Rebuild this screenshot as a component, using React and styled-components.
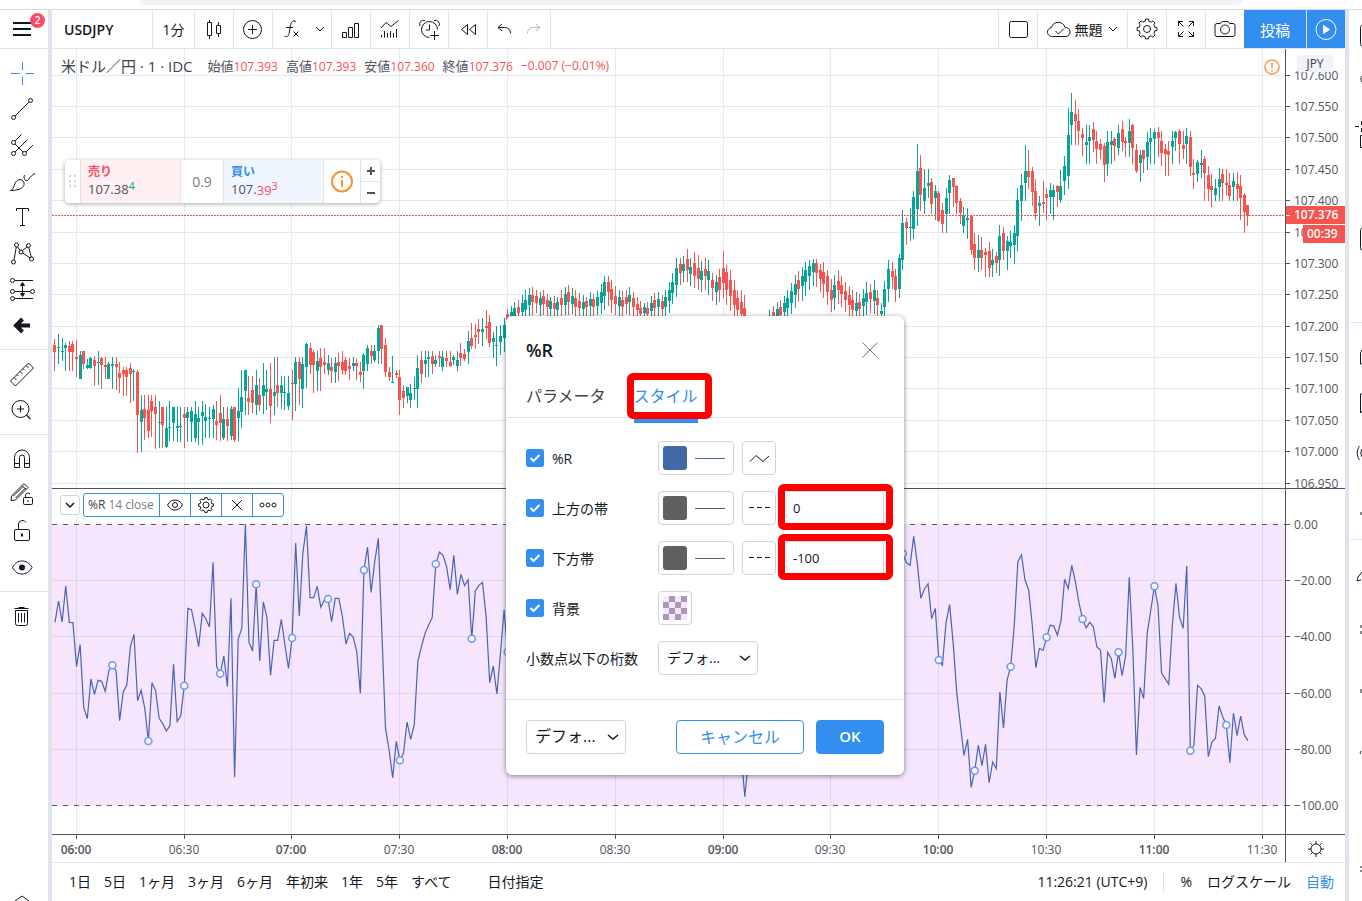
import React, { useState } from 'react';
import styled, { createGlobalStyle } from 'styled-components';

const GlobalStyle = createGlobalStyle`
  * {
    box-sizing: border-box;
  }
  body {
    margin: 0;
    background: #fff;
    color: #131722;
    font-family: 'Open Sans', 'Noto Sans CJK JP', sans-serif;
    font-size: 14px;
  }
  button, input, select {
    font-family: inherit;
    color: inherit;
  }
`;

const BLUE = '#328eef';
const GREEN = '#05a699';
const RED = '#f7534f';
const LINE = '#e0e3eb';
const AXIS = '#50535e';

const Page = styled.div`
  display: flex;
  flex-direction: column;
  height: 100vh;
  overflow: hidden;
`;

const BrowserStrip = styled.div`
  height: 10px;
  flex: none;
  padding: 0 120px 0 140px;
  border-bottom: 1px solid #dadce0;
`;

const AddressBar = styled.div`
  height: 5px;
  background: #f1f3f4;
  border-radius: 0 0 8px 8px;
`;

const Shell = styled.div`
  display: flex;
  flex: 1;
  min-height: 0;
`;

const SideBar = styled.nav`
  display: flex;
  flex-direction: column;
  width: 48px;
  flex: none;
`;

const Gutter = styled.div`
  width: 4px;
  flex: none;
  background: ${LINE};
`;

const Center = styled.main`
  display: flex;
  flex-direction: column;
  flex: 1;
  min-width: 0;
`;

const RightBar = styled.aside`
  width: 13px;
  flex: none;
  overflow: hidden;
`;

const IconButton = styled.button`
  display: flex;
  align-items: center;
  justify-content: center;
  border: 0;
  padding: 0;
  background: none;
  cursor: pointer;
`;

const MenuButton = styled(IconButton)`
  position: relative;
  height: 39px;
  padding-right: 4px;
  border-bottom: 1px solid ${LINE};
`;

const Badge = styled.span`
  position: absolute;
  top: 3px;
  left: 30px;
  width: 15px;
  height: 15px;
  border-radius: 8px;
  background: #ff4a68;
  color: #fff;
  font-size: 10px;
  font-weight: 600;
  line-height: 15px;
  text-align: center;
`;

const ToolGroup = styled.div`
  display: flex;
  flex-direction: column;
  padding: 6px 0;
  border-bottom: ${props => (props.$last ? '0' : `1px solid ${LINE}`)};
`;

const ToolButton = styled(IconButton)`
  width: 44px;
  height: 36px;
  color: ${props => (props.$active ? BLUE : '#131722')};
`;

const SideFoot = styled(IconButton)`
  width: 44px;
  height: 8px;
  margin-top: auto;
`;

const TopBar = styled.header`
  display: flex;
  height: 39px;
  flex: none;
  border-bottom: 1px solid ${LINE};
`;

const TopButton = styled(IconButton)`
  width: ${props => props.$w || 39}px;
  gap: ${props => props.$gap || 0}px;
  border-right: ${props => (props.$plain ? '0' : `1px solid ${LINE}`)};
  font-size: 14px;
`;

const SymbolButton = styled(TopButton)`
  justify-content: flex-start;
  padding-left: 12px;
  font-weight: 600;
`;

const Spacer = styled.div`
  flex: 1;
`;

const RightTools = styled.div`
  display: flex;
  border-left: 1px solid ${LINE};
`;

const PublishButton = styled(IconButton)`
  width: ${props => props.$w}px;
  background: ${BLUE};
  color: #fff;
  font-size: 15px;
  border-right: ${props => (props.$split ? `1px solid ${LINE}` : '0')};
`;

const Pane = styled.section`
  position: relative;
  display: flex;
  flex: ${props => props.$size} 1 0;
  min-height: 0;
  border-bottom: 1px solid ${AXIS};
`;

const Plot = styled.svg`
  display: block;
  flex: 1;
  min-width: 0;
  height: 100%;
`;

const Axis = styled.svg`
  display: block;
  flex: none;
  width: 60px;
  height: 100%;
  border-left: 1px solid ${AXIS};
  font-size: 12px;
`;

const TimeRow = styled.div`
  display: flex;
  flex: none;
  height: 27px;
  font-size: 12px;
`;

const TimeGear = styled(IconButton)`
  width: 60px;
  border-left: 1px solid ${AXIS};
`;

const SymbolLegend = styled.div`
  position: absolute;
  top: 5px;
  left: 9px;
  display: flex;
  align-items: center;
  gap: 8px;
  height: 22px;
  white-space: nowrap;
  font-size: 12px;
  color: ${RED};
`;

const SymbolName = styled.span`
  margin-right: 7px;
  font-size: 15px;
  color: #3c404b;
`;

const OhlcLabel = styled.span`
  font-size: 13px;
  color: #50535e;
`;

const TradeBox = styled.div`
  position: absolute;
  top: 111px;
  left: 13px;
  display: flex;
  height: 43px;
  border-radius: 4px;
  background: #fff;
  box-shadow: 0 1px 4px rgba(60, 64, 80, 0.45);
  overflow: hidden;
`;

const Handle = styled.div`
  display: flex;
  align-items: center;
  justify-content: center;
  width: 15px;
`;

const Quote = styled.button`
  display: flex;
  flex-direction: column;
  justify-content: center;
  width: 101px;
  padding: 0 7px;
  border: 1px solid ${LINE};
  border-width: 0 1px;
  background: ${props => (props.$buy ? '#f0f6fe' : '#fff0f2')};
  text-align: left;
  font-size: 13px;
  line-height: 18px;
  color: #50535e;
`;

const QuoteSide = styled.span`
  font-size: 12px;
  font-weight: 700;
  line-height: 16px;
  color: ${props => (props.$buy ? BLUE : '#ff4a68')};
`;

const Pips = styled.span`
  color: ${props => props.$color};
  sup {
    font-size: 11px;
    line-height: 10px;
  }
`;

const Spread = styled.div`
  width: 42px;
  line-height: 43px;
  text-align: center;
  color: #787b86;
`;

const TradeInfo = styled(IconButton)`
  width: 36px;
`;

const Stepper = styled.div`
  display: flex;
  flex-direction: column;
  width: 20px;
  border-left: 1px solid ${LINE};
`;

const StepButton = styled(IconButton)`
  flex: 1;
  & + & {
    border-top: 1px solid ${LINE};
  }
`;

const StudyLegend = styled.div`
  position: absolute;
  top: 4px;
  left: 8px;
  display: flex;
  align-items: center;
  gap: 3px;
`;

const Collapse = styled(IconButton)`
  width: 20px;
  height: 20px;
  border: 1px solid #d1d4dc;
  border-radius: 3px;
  background: #fff;
`;

const StudyBox = styled.div`
  display: flex;
  height: 24px;
  border: 1px solid ${BLUE};
  border-radius: 3px;
  background: #fff;
`;

const StudyName = styled.span`
  width: 75px;
  padding-left: 4px;
  font-size: 12px;
  line-height: 22px;
  white-space: nowrap;
  color: #787b86;
  b {
    font-weight: 400;
    color: #3c404b;
  }
`;

const StudyButton = styled(IconButton)`
  width: 31px;
  border-left: 1px solid ${BLUE};
`;

const BottomBar = styled.footer`
  display: flex;
  align-items: center;
  flex: none;
  height: 39px;
  padding: 0 11px 0 17px;
  border-top: 1px solid ${LINE};
  white-space: nowrap;
`;

const Ranges = styled.div`
  display: flex;
  gap: 13px;
`;

const TextButton = styled.button`
  border: 0;
  padding: 0;
  background: none;
  font-size: 14px;
  line-height: 20px;
  color: ${props => (props.$on ? BLUE : '#131722')};
`;

const GotoDate = styled(TextButton)`
  margin-left: 36px;
`;

const ScaleTools = styled.div`
  display: flex;
  gap: 15px;
  margin-left: 16px;
  padding-left: 16px;
  border-left: 1px solid ${LINE};
`;

const Dialog = styled.section`
  position: absolute;
  top: 316px;
  left: calc(50% - 175px);
  width: 398px;
  border-radius: 6px;
  background: #fff;
  box-shadow: 0 1px 5px rgba(40, 44, 60, 0.6);
`;

const DialogHead = styled.div`
  display: flex;
  align-items: center;
  justify-content: space-between;
  height: 58px;
  padding: 10px 24px 0 20px;
`;

const DialogTitle = styled.h2`
  margin: 0;
  font-size: 18px;
  font-weight: 600;
`;

const Tabs = styled.div`
  display: flex;
  gap: 28px;
  height: 44px;
  padding: 0 20px;
  border-bottom: 1px solid ${LINE};
`;

const Tab = styled.button`
  position: relative;
  height: 49px;
  padding: 0 0 2px;
  border: 0;
  border-bottom: 5px solid ${props => (props.$active ? BLUE : 'transparent')};
  background: none;
  font-size: 16px;
  color: ${props => (props.$active ? BLUE : '#3c404b')};
`;

const Marker = styled.span`
  position: absolute;
  inset: ${props => props.$inset};
  border: 7px solid #fe0000;
  border-radius: 6px;
  pointer-events: none;
`;

const DialogBody = styled.div`
  display: flex;
  flex-direction: column;
  gap: 16px;
  padding: 23px 20px 24px;
`;

const Row = styled.div`
  display: grid;
  grid-template-columns: 132px 1fr;
  align-items: center;
  height: 34px;
`;

const CheckLabel = styled.label`
  display: flex;
  align-items: center;
  gap: 8px;
  color: #131722;
`;

const CheckInput = styled.input`
  appearance: none;
  width: 18px;
  height: 18px;
  margin: 0;
  border-radius: 3px;
  border: 1px solid ${BLUE};
`;

const CheckWrap = styled.span`
  position: relative;
  display: flex;
  svg {
    position: absolute;
    top: 0;
    left: 0;
    pointer-events: none;
  }
`;

const Controls = styled.div`
  display: flex;
  gap: 8px;
`;

const BoxButton = styled(IconButton)`
  justify-content: flex-start;
  gap: 8px;
  width: ${props => props.$w || 34}px;
  height: 34px;
  padding: 0 4px;
  border: 1px solid #d1d4dc;
  border-radius: 4px;
  background: #fff;
`;

const Swatch = styled.span`
  width: 24px;
  height: 24px;
  border-radius: 3px;
  background: ${props => props.$color};
`;

const Stroke = styled.span`
  width: 30px;
  height: 1px;
  background: ${props => props.$color};
`;

const ValueBox = styled.span`
  position: relative;
`;

const ValueInput = styled.input`
  display: block;
  width: 100px;
  height: 34px;
  padding: 0 8px;
  border: 1px solid #d1d4dc;
  border-radius: 4px;
  font-size: 13px;
`;

const SelectWrap = styled.span`
  position: relative;
  display: block;
  width: 100px;
  svg {
    position: absolute;
    top: 11px;
    right: 7px;
    pointer-events: none;
  }
`;

const Select = styled.select`
  appearance: none;
  display: block;
  width: 100px;
  height: 34px;
  padding: 0 8px 2px;
  border: 1px solid #d1d4dc;
  border-radius: 4px;
  background: #fff;
  font-size: ${props => props.$size}px;
`;

const DialogFoot = styled.div`
  display: flex;
  align-items: center;
  gap: 12px;
  padding: 20px 20px 21px;
  border-top: 1px solid ${LINE};
`;

const ActionButton = styled.button`
  width: ${props => props.$w}px;
  height: 34px;
  padding: 0 0 2px;
  border: 1px solid ${BLUE};
  border-radius: 4px;
  background: ${props => (props.$primary ? BLUE : '#fff')};
  color: ${props => (props.$primary ? '#fff' : BLUE)};
  font-size: ${props => (props.$primary ? 15 : 16)}px;
  font-weight: ${props => (props.$primary ? 600 : 400)};
`;

// Line icon on a square grid, one unit per pixel
const Icon = ({ size = 28, w = 1, children, color = 'currentColor' }) => (
  <svg width={size} height={size} viewBox={`0 0 ${size} ${size}`} fill="none" stroke={color} strokeWidth={w} aria-hidden="true">
    {children}
  </svg>
);

const gearPath = (cx, cy, outer, inner, teeth) => {
  const points = [];
  const step = (Math.PI * 2) / teeth;
  for (let k = 0; k < teeth; k++) {
    const a = k * step - Math.PI / 2;
    [[-0.3, inner], [-0.2, outer], [0.2, outer], [0.3, inner]].forEach(([f, r]) => {
      points.push(`${(cx + r * Math.cos(a + f * step)).toFixed(2)} ${(cy + r * Math.sin(a + f * step)).toFixed(2)}`);
    });
  }
  return `M${points.join('L')}Z`;
};

const Chevron = ({ w = 1 }) => (
  <Icon size={12} w={w}><path d="M2 4l4 4 4-4" /></Icon>
);

const TOOLS = [
  [
    ['クロス', <path d="M14.500 3v8M14.500 18v8M3 14.500h8.500M17.500 14.500H26" />],
    ['トレンドライン', <><circle cx="5.500" cy="22.500" r="2" /><circle cx="22.500" cy="5.500" r="2" /><path d="M7 21L21 7" /></>],
    ['ピッチフォーク', <><circle cx="5.500" cy="11.500" r="2" /><circle cx="5.500" cy="22.500" r="2" /><circle cx="16.500" cy="22.500" r="2" /><path d="M7 10l6.500-6.500M7 21L19.500 8.500M18 21l7-7M7 13l8 8" /></>],
    ['ブラシ', <path d="M2.500 23.500c3-1 3-4 4.500-7 1.500-4 6-5 8-2.500 2.500 3 .5 6.500-3 8-2.500 1-6 1.500-9.500 1.500zM16.500 8c-1 2-.5 4.500 1.500 5.500 1 .5 2 0 3-1.500 1.500-2.500 3-4 6-5.500" />],
    ['テキスト', <path d="M8.500 8V5.500h12V8M14.500 5.500v17M12 22.500h5" />],
    ['パターン', <><circle cx="5.500" cy="23" r="2" /><circle cx="8.500" cy="6" r="2" /><circle cx="13" cy="13" r="2" /><circle cx="20.500" cy="6.500" r="2" /><circle cx="23.500" cy="20" r="2" /><path d="M6 21L8.300 8M9.500 7.800l2.500 3.500M14.300 11.500l5-3.500M20.800 8.500l2.400 9.500M14.800 14l7.200 5" /></>],
    ['予測', <><circle cx="4.500" cy="5.500" r="2" /><circle cx="4.500" cy="16.500" r="2" /><circle cx="24.500" cy="16.500" r="2" /><circle cx="4.500" cy="23.500" r="2" /><path d="M7 5.500h18M7 16.500h15M7 23.500h18M14.500 8v13" /><path d="M12.500 10.500l2-3 2 3zM12.500 18.500l2 3 2-3z" fill="currentColor" /></>],
    ['矢印', <path d="M14.500 8L8 14.500l6.500 6.500M8.500 14.500H22" strokeWidth="4" />],
  ],
  [
    ['計測', <path d="M2.500 21L20.500 3l5 5L7.500 26zM6 17.500l2.500 2.500M9 14.500l1.500 1.500M12 11.500l2.500 2.500M15 8.500l1.500 1.500M18 5.500l2.500 2.500" />],
    ['ズーム', <><circle cx="12.500" cy="13" r="8.500" /><path d="M12.500 9.500v7M9 13h7M18.500 19l4 4" strokeWidth="1.200" /></>],
  ],
  [
    ['マグネット', <path d="M6.500 22.500v-10a7.500 7.500 0 0 1 15 0v10h-5v-10a2.500 2.500 0 0 0-5 0v10zM6.500 18.500h5M16.500 18.500h5" />],
    ['描画モード', <><path d="M3.500 15L16 2.500l4 4L7.500 19l-4.500.5zM5.500 15L15 5.500M7.500 17L17.500 7M14 4.500l4 4" /><rect x="15.500" y="16.500" width="9" height="7" rx="1" /><path d="M17.500 16v-2a2.500 2.500 0 0 1 4.500-1M20 19v2" /></>],
    ['ロック', <><rect x="6.500" y="12.500" width="15" height="11" rx="1.500" /><path d="M10.500 12v-5a4 4 0 0 1 7.500-1.500" /><path d="M14 16.500v3" strokeWidth="2" /></>],
    ['表示', <><path d="M4.500 14.500C7 10 10 8 14 8s7.500 2 10 6.500C21.500 19 18 21 14 21s-7-2-9.500-6.500z" /><circle cx="14" cy="14.500" r="3" fill="currentColor" stroke="none" /></>],
  ],
  [
    ['削除', <path d="M7.500 8.500h12v13a2 2 0 0 1-2 2h-8a2 2 0 0 1-2-2zM6.500 6.500h14M10.500 5.500h6M10.500 11v9.500M13.500 11v9.500M16.500 11v9.500" />],
  ],
];

const LeftTools = () => (
  <SideBar>
    <MenuButton aria-label="メニュー">
      <Icon w={2}><path d="M5 8h18M5 14h18M5 20h18" /></Icon>
      <Badge>2</Badge>
    </MenuButton>
    {TOOLS.map((group, g) => (
      <ToolGroup key={g} $last={g === TOOLS.length - 1}>
        {group.map(([name, shape], k) => (
          <ToolButton key={name} aria-label={name} $active={g === 0 && k === 0}>
            <Icon>{shape}</Icon>
          </ToolButton>
        ))}
      </ToolGroup>
    ))}
    <SideFoot aria-label="開く">
      <svg width="20" height="8" fill="none" stroke="#131722" aria-hidden="true"><path d="M3 8l7-5 7 5" /></svg>
    </SideFoot>
  </SideBar>
);

const TopTools = () => (
  <TopBar>
    <SymbolButton $w={101}>USDJPY</SymbolButton>
    <TopButton $w={42}>1分</TopButton>
    <TopButton aria-label="ローソク足">
      <Icon><path d="M7.500 7.500h4v13h-4zM9.500 5v2.500M9.500 20.500V24M16.500 10.500h4v8h-4zM18.500 7v3.500M18.500 18.500V22" /></Icon>
    </TopButton>
    <TopButton aria-label="比較">
      <Icon><circle cx="13.500" cy="14.500" r="9" /><path d="M13.500 10v9M9 14.500h9" /></Icon>
    </TopButton>
    <TopButton $w={59} $gap={8} aria-label="インジケーター">
      <Icon><path d="M18 6.500c-3-1.500-5 .5-5.500 4l-1.500 8c-.5 3-2.500 4-4.500 2.500M8 12.500h7M15.500 16.500l5 5M20.500 16.500l-5 5" /></Icon>
      <Chevron />
    </TopButton>
    <TopButton aria-label="財務">
      <Icon><path d="M5.500 17.500h4v5h-4zM11.500 12.500h4v10h-4zM17.500 8.500h4v14h-4z" /></Icon>
    </TopButton>
    <TopButton aria-label="テンプレート">
      <Icon><path d="M5 13l5-5.500 5 4 7.500-6M5.500 20v2.500M8.500 16v6.500M11.500 18v4.500M14.500 16v6.500M17.500 18v4.500M20.500 14v8.500" /></Icon>
    </TopButton>
    <TopButton aria-label="アラート">
      <Icon><path d="M14.500 22.500a8 8 0 1 1 8-8M14.500 9.500v5.500H11M5 11a4 4 0 0 1 5-5.500M24 11a4 4 0 0 0-5-5.500M15 20.500h9M19.500 16v9" /></Icon>
    </TopButton>
    <TopButton aria-label="リプレイ">
      <Icon><path d="M13.500 9.500v10l-6-5zM21.500 9.500v10l-6-5z" /></Icon>
    </TopButton>
    <TopButton $w={63}>
      <Icon><path d="M11 9l-4 3.500 4 3.500M7.500 12.500h6c3.500 0 6 2 6 6" /></Icon>
      <Icon color="#b2b5be"><path d="M17 9l4 3.500-4 3.500M20.500 12.500h-6c-3.500 0-6 2-6 6" /></Icon>
    </TopButton>
    <Spacer />
    <RightTools>
      <TopButton aria-label="レイアウト">
        <Icon><rect x="5.500" y="6.500" width="18" height="16" rx="2" /></Icon>
      </TopButton>
      <TopButton $w={90} $gap={4}>
        <Icon size={24}><path d="M5.500 19.500a4.500 4.500 0 0 1-1-9 7 7 0 0 1 13.500 0 4.500 4.500 0 0 1 1 9zM8.500 14l3 3 5-5" /></Icon>
        無題
        <Chevron />
      </TopButton>
      <TopButton aria-label="設定">
        <Icon><path d={gearPath(14, 14, 10, 8, 8)} strokeLinejoin="round" /><circle cx="14" cy="14" r="3.500" /></Icon>
      </TopButton>
      <TopButton aria-label="全画面">
        <Icon><path d="M6.500 11V6.500H11M6.500 6.500l5 5M17 6.500h4.500V11M21.500 6.500l-5 5M6.500 17v4.500H11M6.500 21.500l5-5M21.500 17v4.500H17M21.500 21.500l-5-5" /></Icon>
      </TopButton>
      <TopButton $plain $w={38} aria-label="スナップショット">
        <Icon><path d="M6 8.500h3.500l1.500-2h6l1.500 2H22a2 2 0 0 1 2 2v9a2 2 0 0 1-2 2H6a2 2 0 0 1-2-2v-9a2 2 0 0 1 2-2z" /><circle cx="14" cy="14.500" r="4.500" /></Icon>
      </TopButton>
      <PublishButton $w={63} $split>投稿</PublishButton>
      <PublishButton $w={38} aria-label="配信">
        <Icon><circle cx="14" cy="14.500" r="10" /><path d="M11.500 10.500v8l6-4z" fill="#fff" /></Icon>
      </PublishButton>
    </RightTools>
  </TopBar>
);

const PLOT_W = 1233;
const barX = i => 2.45 + 3.593 * i;

// colour, high, body top, body bottom, low (three units per pixel below `top`)
const CANDLES = [
  {
    first: 0,
    top: 261,
    rows: `r 87 105 126 183|g 72 110 114 162|g 84 122 125 153|g 98 105 114 183|r 93 108 126 183|r 93 102 126 183|r 90 141 147 201|g 123 135 207 207|r 123 123 162 177|g 147 165 174 177
|g 141 144 174 177|r 138 150 168 228|g 123 155 158 225|r 141 144 165 237|r 141 165 171 207|g 156 162 207 207|g 141 162 168 237|r 141 162 171 240|r 156 189 204 249|r 171 180 192 258
|r 171 180 201 258|r 159 174 192 279|g 177 183 186 273|r 180 186 315 429|g 255 300 336 426|r 255 297 324 390|r 255 300 363 384|r 255 273 303 381|r 255 291 312 417|g 273 336 339 414
|r 291 291 345 414|g 291 354 411 414|g 273 351 354 393|g 291 291 339 393|g 291 348 354 396|g 291 348 351 396|r 291 312 324 414|g 291 306 324 396|g 291 303 336 396|g 273 312 384 396
|g 291 324 336 405|g 273 306 318 405|g 282 321 333 384|g 291 324 327 384|g 285 297 327 384|r 273 333 345 390|r 255 309 339 393|g 291 327 384 390|r 291 327 348 393|g 288 297 378 390
|r 291 291 390 396|g 234 303 324 393|g 180 261 306 354|g 180 180 243 315|r 198 264 276 315|r 198 240 279 309|g 180 225 285 315|r 204 255 285 303|g 159 225 258 312|g 180 237 246 300
|r 159 237 288 339|g 141 246 258 315|r 141 225 249 291|g 198 225 249 297|g 198 246 249 300|g 198 249 288 300|r 180 219 222 330|g 141 156 222 303|r 141 156 207 285|g 141 162 237 294
|g 99 102 171 234|r 99 114 165 192|r 120 126 165 249|g 123 153 183 243|r 114 144 171 243|r 114 156 165 192|g 135 159 180 195|r 144 171 183 219|g 141 159 186 219|r 129 156 168 213
|r 123 156 180 195|r 141 150 183 195|r 144 168 177 210|g 141 159 168 183|r 147 159 168 210|r 156 186 195 216|g 129 135 183 237|g 105 114 162 183|r 105 123 138 162|g 105 123 150 156
|g 45 54 123 162|r 45 45 117 162|r 84 105 186 201|r 171 186 201 213|g 138 216 219 219|r 180 189 195 204|r 180 201 270 315|r 225 243 264 294|g 231 231 258 279|g 222 249 270 294
|g 201 234 237 270|g 135 174 237 294|r 123 150 192 219|g 123 150 162 201|g 123 141 147 201|r 123 138 162 192|g 135 150 162 171|r 123 138 144 171|g 123 141 171 183|r 123 144 153 171
|r 123 156 168 171|g 135 141 150 165|g 123 150 168 183|r 99 129 144 168|r 117 132 147 153|g 63 93 126 162|r 39 84 108 117|r 42 75 81 118|r 27 57 66 102|g 24 57 66 108
|r 0 48 54 87|r 15 36 99 111|g 66 84 96 144|g 48 105 108 168|g 45 78 96 135|g 25 45 85 125`,
  },
  {
    first: 126,
    top: 191,
    rows: `r 207 222 240 262|g 198 216 240 262|g 186 204 234 258|r 180 201 219 240|g 165 189 216 240|g 150 180 210 234|g 144 165 195 228|r 141 165 186 225|r 150 168 189 219|g 156 174 195 231
|r 150 168 192 225|r 162 180 201 234|g 171 183 207 231|r 168 189 207 240|g 171 186 210 234|r 150 174 195 231|g 141 162 195 225|r 135 156 186 225|g 144 168 192 222|r 150 174 201 234
|r 159 183 204 231|g 165 186 207 237|r 171 183 201 234|g 156 177 198 231|r 162 177 201 234|g 153 171 198 225|g 132 156 189 222|g 108 126 168 210|r 108 126 156 198|r 120 147 180 219
|r 138 168 192 225|g 150 171 198 234|r 153 180 201 231|r 150 171 192 222|g 141 165 186 225|r 156 174 201 231|r 171 192 210 240|r 183 204 222 246|g 189 201 219 243|r 186 204 222 240
|g 168 189 213 237|r 159 180 204 234|g 156 177 201 231|r 165 183 207 234|g 150 171 201 228|g 126 150 183 219|g 99 126 159 192|g 54 84 135 171|r 54 72 99 135|g 48 72 93 126
|r 27 57 90 126|g 54 81 102 138|r 36 69 108 144|r 45 84 117 150|g 63 93 120 156|r 54 87 108 150|g 60 93 120 165|r 99 120 144 183|g 105 126 156 195|r 87 111 150 186
|r 33 84 129 174|r 75 96 150 195|r 90 120 168 213|r 120 150 195 228|r 150 174 210 240|r 150 186 222 250|r 165 204 234 262`,
  },
  {
    first: 199,
    top: 191,
    rows: `g 210 228 246 262|r 198 216 237 255|g 186 207 228 246|r 180 201 225 246|g 168 189 216 240|g 150 174 204 234|g 129 153 189 222|g 105 132 165 204|r 93 120 147 186|g 81 108 138 183
|g 66 90 126 168|g 60 78 108 150|g 57 69 96 138|r 57 69 99 141|r 72 90 117 156|r 66 96 132 174|r 90 108 156 195|r 117 150 180 216|g 105 135 174 210|r 90 123 150 192
|r 108 135 162 201|r 126 153 180 216|r 138 165 195 228|r 150 180 210 240|g 156 189 213 240|r 162 186 207 237|g 147 174 198 231|g 126 159 186 225|r 132 156 177 219|g 120 150 183 222
|r 150 174 195 231`,
  },
  {
    first: 230,
    top: 11,
    rows: `g 729 753 762 768|g 663 687 741 768|g 600 627 687 726|r 606 633 651 687|r 627 648 690 726|g 582 594 687 714|g 450 489 600 630|r 474 486 504 555|g 444 501 504 543|g 393 411 507 537
|g 252 333 447 498|r 285 324 405 453|g 327 384 423 462|g 327 369 378 414|r 354 366 432 462|g 375 393 414 480|r 393 399 483 486|r 429 450 492 519|g 384 414 462 519|g 345 360 399 462
|r 354 354 381 441|r 375 378 429 462|r 414 423 459 492|g 441 468 498 519|g 444 474 480 537|r 468 468 570 585|r 519 552 594 630|g 525 570 594 636|r 531 570 594 630|r 564 576 585 651
|r 546 573 624 651|g 567 600 615 651|r 576 588 609 639|g 495 528 600 648|r 501 519 573 600|g 528 543 573 630|g 513 546 558 594|g 495 519 555 612|g 384 420 528 573|g 342 375 423 483
|g 255 333 369 423|r 270 333 351 387|r 321 333 396 438|r 357 393 459 480|g 408 429 438 498|r 363 426 432 459|r 384 402 414 480|g 369 390 411 462|g 375 390 411 480|r 375 378 396 441
|g 330 378 420 429|g 288 318 363 405|g 144 225 348 387|g 99 156 195 255|r 120 162 183 255|r 147 183 213 255|r 204 222 234 288|g 195 246 255 312|g 195 231 243 312|r 186 207 240 276
|r 213 243 267 312|r 237 252 270 297|r 249 258 315 366|g 213 246 312 348|g 213 243 255 312|r 231 237 258 303|g 195 219 264 285|r 183 207 246 273|r 231 243 249 291|g 177 213 249 291
|r 192 195 264 312|r 252 270 333 339|g 270 285 309 366|r 270 270 297 339|g 216 246 291 330|g 204 234 246 312|g 207 216 237 312|r 201 216 234 291|r 213 243 279 318|r 252 267 282 348
|r 243 273 285 348|g 213 243 261 312|g 213 216 234 273|r 207 213 252 312|r 213 255 267 297|g 204 228 252 312|r 213 231 321 348|r 297 339 345 387|g 300 306 342 366|g 270 309 315 354
|r 288 297 339 423|r 318 345 387 423|r 342 378 390 441|g 357 384 405 423|g 324 357 381 423|r 327 342 369 423|r 327 369 375 405|r 339 375 408 423|g 339 363 381 423|r 336 372 387 423
|r 345 378 414 480|r 399 405 456 519|r 435 435 468 498`,
  },
];

const candles = CANDLES.flatMap(({ first, top, rows }) =>
  rows.split('|').map((row, k) => {
    const [color, ...values] = row.trim().split(' ');
    const [high, open, close, low] = values.map(v => Math.round(top + v / 3));
    return { x: Math.round(barX(first + k)), color: color === 'g' ? GREEN : RED, high, open, close, low };
  })
);

// Oscillator readings, 0 at the upper band and 844 at the lower one
const STUDY = [
  {
    first: 0,
    values: `307 243 306 198 307 308 440 374 562 596 477 523 481 484 514 452 436 452 602 516 495 380 343 542 511 565 663 488 511 595
611 633 617 433 604 588 497 265 269 322 380 280 297 320 127 440 461 408 500 235 772 357 325 12 367 393 193 423 246 292
466 361 361 298 375 445 354 69 288 100 18 233 233 199 262 240 237 305 235 235 290 372 340 351 395 520 150 81 217 125
55 340 625 690 773 664 721 700 606 658 615 425 380 340 315 293 132 96 106 140 209 106 223 163 197 179 356 213 196 187
290 488 438 522 400 270 396`,
  },
  { first: 191, values: '700 830 720' },
  {
    first: 236,
    values: `101 128 136 49 130 235 207 192 296 265 420 436 308 254 370 520 615 706 658 802 752 676 737 673 788 726 746 516 624 480
440 315 125 105 180 210 315 443 385 391 352 315 319 345 303 178 206 136 185 248 297 324 307 320 381 390 548 397 416 475
397 467 407 172 390 705 502 536 340 270 199 258 460 476 493 315 190 292 325 138 692 676 496 506 528 710 666 655 558 590
615 728 579 647 588 644 662`,
  },
];

const study = STUDY.map(({ first, values }) =>
  values.split(/\s+/).map((v, k) => ({ i: first + k, x: barX(first + k) + 0.5, y: 31 + v / 3 }))
);

const PRICES = [
  [26, '107.600'], [57, '107.550'], [88, '107.500'], [120, '107.450'], [151, '107.400'], [183, '107.350'], [214, '107.300'],
  [245, '107.250'], [277, '107.200'], [308, '107.150'], [339, '107.100'], [371, '107.050'], [402, '107.000'], [434, '106.950'],
];
const LEVELS = [[35, '0.00'], [91, '−20.00'], [147, '−40.00'], [204, '−60.00'], [260, '−80.00'], [316, '−100.00']];
const TIMES = [
  [24, '06:00'], [132, '06:30'], [239, '07:00'], [347, '07:30'], [455, '08:00'], [563, '08:30'],
  [671, '09:00'], [778, '09:30'], [886, '10:00'], [994, '10:30'], [1102, '11:00'], [1210, '11:30'],
];

// Content stays attached to the right edge of the plot
const RightAligned = ({ children }) => (
  <svg x="100%" overflow="visible">
    <g transform={`translate(${-PLOT_W} 0)`}>{children}</g>
  </svg>
);

const TimeGrid = ({ color, y = 0, height = 450 }) =>
  TIMES.map(([x]) => <rect key={x} x={x} y={y} width="1" height={height} fill={color} />);

const PricePane = () => (
  <Pane $size={440}>
    <Plot>
      {PRICES.map(([y]) => <rect key={y} y={y} width="100%" height="1" fill="#e1ecf2" />)}
      <RightAligned>
        <TimeGrid color="#e1ecf2" />
        {candles.map(c => (
          <g key={c.x} fill={c.color}>
            <rect x={c.x} y={c.high} width="1" height={c.low - c.high} />
            <rect x={c.x - 1} y={c.open} width="3" height={Math.max(1, c.close - c.open)} />
          </g>
        ))}
        <g fill="none" stroke="#f79a4e" strokeWidth="1.500">
          <circle cx="1220" cy="18" r="7" />
          <path d="M1220 13.500v5.500M1220 20.500v2" />
        </g>
      </RightAligned>
      <line x1="0" x2="100%" y1="166.500" y2="166.500" stroke="#ef5350" strokeDasharray="2 1" />
    </Plot>
    <Axis>
      {PRICES.map(([y, label]) => (
        <g key={y}>
          <rect y={y} width="4" height="1" fill={AXIS} />
          <text x="8" y={y + 5} fill={AXIS}>{label}</text>
        </g>
      ))}
      <rect x="11" y="6" width="36" height="17" rx="2" fill="#f0f3fa" />
      <text x="29" y="19" textAnchor="middle" fill="#3c404b">JPY</text>
      <rect x="-1" y="157" width="61" height="18" fill={RED} />
      <rect y="166" width="4" height="1" fill="#fff" />
      <rect x="17" y="176" width="43" height="18" fill={RED} />
      <g fill="#fff" fontWeight="600">
        <text x="8" y="170">107.376</text>
        <text x="21" y="189">00:39</text>
      </g>
    </Axis>
    <SymbolLegend>
      <SymbolName>米ドル／円 · 1 · IDC</SymbolName>
      {[['始値', '107.393'], ['高値', '107.393'], ['安値', '107.360'], ['終値', '107.376']].map(([label, value]) => (
        <span key={label}><OhlcLabel>{label}</OhlcLabel>{value}</span>
      ))}
      <span>−0.007 (−0.01%)</span>
    </SymbolLegend>
    <TradeBox>
      <Handle>
        <svg width="7" height="13" fill="#d1d4dc" aria-hidden="true">
          {[0, 5, 10].map(y => <path key={y} d={`M0 ${y}h2v2h-2zM5 ${y}h2v2h-2z`} />)}
        </svg>
      </Handle>
      <Quote>
        <QuoteSide>売り</QuoteSide>
        <span>107.38<Pips $color={GREEN}><sup>4</sup></Pips></span>
      </Quote>
      <Spread>0.9</Spread>
      <Quote $buy>
        <QuoteSide $buy>買い</QuoteSide>
        <span>107.<Pips $color="#ff4a68">39<sup>3</sup></Pips></span>
      </Quote>
      <TradeInfo aria-label="情報">
        <Icon size={24} w={2} color="#f7942d"><circle cx="12" cy="11.500" r="10" /><path d="M12 6v2M12 10v7" /></Icon>
      </TradeInfo>
      <Stepper>
        <StepButton aria-label="増やす"><Icon size={10} w={2} color="#50535e"><path d="M5 1v8M1 5h8" /></Icon></StepButton>
        <StepButton aria-label="減らす"><Icon size={10} w={2} color="#50535e"><path d="M1 5h8" /></Icon></StepButton>
      </Stepper>
    </TradeBox>
  </Pane>
);

const StudyPane = () => (
  <Pane $size={346}>
    <Plot>
      <RightAligned><TimeGrid color="#e1ecf2" /></RightAligned>
      <rect y="35" width="100%" height="282" fill="#f6e6fd" />
      {LEVELS.slice(1, 5).map(([y]) => <rect key={y} y={y} width="100%" height="1" fill="#dbd5f0" />)}
      <RightAligned>
        <TimeGrid color="#dbd5f0" y={35} height={282} />
      </RightAligned>
      {[35.5, 316.5].map(y => (
        <line key={y} x1="0" x2="100%" y1={y} y2={y} stroke="#5f5068" strokeDasharray="5 6" />
      ))}
      <RightAligned>
        {study.map(run => (
          <polyline key={run[0].i} points={run.map(p => `${p.x},${p.y}`).join(' ')} fill="none" stroke="#4b63b4" strokeWidth="1.200" />
        ))}
        {study.flat().filter(p => p.i > 6 && p.i % 10 === 6).map(p => (
          <circle key={p.i} cx={p.x} cy={p.y} r="3.500" fill="#fbf3fe" stroke="#6d9bee" strokeWidth="1.500" />
        ))}
      </RightAligned>
    </Plot>
    <Axis>
      {LEVELS.map(([y, label]) => (
        <g key={y} fill={AXIS}>
          <rect y={y} width="4" height="1" />
          <text x="8" y={y + 5}>{label}</text>
        </g>
      ))}
    </Axis>
    <StudyLegend>
      <Collapse aria-label="折りたたむ"><Chevron w={1.5} /></Collapse>
      <StudyBox>
        <StudyName><b>%R</b> 14 close</StudyName>
        <StudyButton aria-label="表示">
          <Icon size={18}><path d="M1.500 9C3.500 5.500 6 4 9 4s5.500 1.500 7.500 5C14.500 12.500 12 14 9 14s-5.500-1.500-7.500-5z" /><circle cx="9" cy="9" r="2.500" /></Icon>
        </StudyButton>
        <StudyButton aria-label="設定">
          <Icon size={18}><path d={gearPath(9, 9, 7.5, 6, 8)} strokeLinejoin="round" /><circle cx="9" cy="9" r="3" /></Icon>
        </StudyButton>
        <StudyButton aria-label="削除">
          <Icon size={18}><path d="M4 4l10 10M14 4L4 14" /></Icon>
        </StudyButton>
        <StudyButton aria-label="その他">
          <Icon size={18}><circle cx="3" cy="9" r="2" /><circle cx="9" cy="9" r="2" /><circle cx="15" cy="9" r="2" /></Icon>
        </StudyButton>
      </StudyBox>
    </StudyLegend>
  </Pane>
);

const TimeScale = () => (
  <TimeRow>
    <Plot>
      <RightAligned>
        <TimeGrid color={AXIS} height={4} />
        {TIMES.map(([x, label]) => (
          <text key={label} x={x} y="19" textAnchor="middle" fill={AXIS} fontWeight={label.endsWith('00') ? 600 : 400}>{label}</text>
        ))}
      </RightAligned>
    </Plot>
    <TimeGear aria-label="スケール設定">
      <Icon size={18}>
        <circle cx="9" cy="9" r="5" />
        <path d="M9 1v3M9 14v3M1 9h3M14 9h3M3.500 3.500l2 2M12.500 12.500l2 2M3.500 14.500l2-2M12.500 5.500l2-2" />
      </Icon>
    </TimeGear>
  </TimeRow>
);

const RangeBar = () => (
  <BottomBar>
    <Ranges>
      {['1日', '5日', '1ヶ月', '3ヶ月', '6ヶ月', '年初来', '1年', '5年', 'すべて'].map(range => (
        <TextButton key={range}>{range}</TextButton>
      ))}
    </Ranges>
    <GotoDate>日付指定</GotoDate>
    <Spacer />
    <TextButton>11:26:21 (UTC+9)</TextButton>
    <ScaleTools>
      <TextButton>%</TextButton>
      <TextButton>ログスケール</TextButton>
      <TextButton $on>自動</TextButton>
    </ScaleTools>
  </BottomBar>
);

// Widget rail: only the left edge of its icons fits in the window
const WidgetRail = () => (
  <RightBar>
    <svg width="13" height="891" fill="none" stroke="#131722" aria-hidden="true">
      <path d="M1 312.500h12M1 529.500h12" stroke={LINE} />
      <path d="M13 15.500c-1.500 0-1.500 1-1.500 2v16c0 1.500 0 2.500 1.500 2.500M13 218.500c-1.500 0-1.500 1-1.500 2v17c0 1.500 0 2.500 1.500 2.500" />
      <path d="M13 66c-1.500 2-1.500 4 0 6" />
      <path d="M6 116.500h4M12.500 111v4M12.500 118v4M13 125.500h-1.500v12H13" />
      <path d="M13 340l-1.500 3v11H13M11.500 384v19M13 384h-1.500M11.500 403l1.500-2" />
      <path d="M10.500 436c-3 4-3 10 0 14M13 439c-1.500 3-1.500 5 0 8" />
      <path d="M12 502v3M13 562l-4 5-1 4 4-1" />
      <path d="M12 615v3M12 621v3M12 679v4M12 741c-1 1-1 2 0 3M12 856v2M12 860v2" />
    </svg>
  </RightBar>
);

const StyleCheck = ({ label }) => {
  const [checked, setChecked] = useState(true);
  return (
    <CheckLabel>
      <CheckWrap>
        <CheckInput type="checkbox" checked={checked} onChange={e => setChecked(e.target.checked)} />
        {checked && (
          <svg width="18" height="18" fill="none" stroke="#fff" strokeWidth="2" aria-hidden="true">
            <rect width="18" height="18" rx="3" fill={BLUE} stroke="none" />
            <path d="M4.500 9l3 3 6-6" />
          </svg>
        )}
      </CheckWrap>
      {label}
    </CheckLabel>
  );
};

const ColorButton = ({ color }) => (
  <BoxButton $w={76} aria-label="色">
    <Swatch $color={color} />
    <Stroke $color={color} />
  </BoxButton>
);

const Band = ({ label, value }) => (
  <Row>
    <StyleCheck label={label} />
    <Controls>
      <ColorButton color="#606060" />
      <BoxButton aria-label="線種">
        <Icon size={24}><path d="M2 11.500h5M10 11.500h5M18 11.500h5" /></Icon>
      </BoxButton>
      <ValueBox>
        <ValueInput aria-label={label} defaultValue={value} />
        <Marker $inset="-7px -9px -5px -6px" />
      </ValueBox>
    </Controls>
  </Row>
);

const Dropdown = ({ label, size }) => (
  <SelectWrap>
    <Select aria-label={label} $size={size}>
      <option>デフォ...</option>
    </Select>
    <Icon size={12} w={1.5}><path d="M1 4l5 4 5-4" /></Icon>
  </SelectWrap>
);

const checks = [0, 1, 2, 3].flatMap(r => [0, 1, 2, 3].filter(c => (r + c) % 2 === 1).map(c => [c * 6, r * 6]));

const StyleDialog = () => (
  <Dialog role="dialog" aria-label="%R">
    <DialogHead>
      <DialogTitle>%R</DialogTitle>
      <IconButton aria-label="閉じる">
        <Icon size={20} color="#787b86"><path d="M2.500 2.500l15 15M17.500 2.500l-15 15" /></Icon>
      </IconButton>
    </DialogHead>
    <Tabs>
      <Tab>パラメータ</Tab>
      <Tab $active>
        スタイル
        <Marker $inset="-1px -14px -1px -7px" />
      </Tab>
    </Tabs>
    <DialogBody>
      <Row>
        <StyleCheck label="%R" />
        <Controls>
          <ColorButton color="#4169a8" />
          <BoxButton aria-label="線種">
            <Icon size={24}><path d="M3 15.500l6-6 7 6 6-5.500" /></Icon>
          </BoxButton>
        </Controls>
      </Row>
      <Band label="上方の帯" value="0" />
      <Band label="下方帯" value="-100" />
      <Row>
        <StyleCheck label="背景" />
        <BoxButton aria-label="背景色">
          <svg width="24" height="24" aria-hidden="true">
            <rect width="24" height="24" rx="3" fill="#f6e6fd" />
            {checks.map(([x, y]) => (
              <rect key={`${x}-${y}`} x={x} y={y} width="6" height="6" fill="#ac98b8" />
            ))}
          </svg>
        </BoxButton>
      </Row>
      <Row>
        <span>小数点以下の桁数</span>
        <Dropdown label="小数点以下の桁数" size={14} />
      </Row>
    </DialogBody>
    <DialogFoot>
      <Dropdown label="テンプレート" size={16} />
      <Spacer />
      <ActionButton $w={128}>キャンセル</ActionButton>
      <ActionButton $w={68} $primary>OK</ActionButton>
    </DialogFoot>
  </Dialog>
);

const App = () => (
  <Page>
    <GlobalStyle />
    <BrowserStrip><AddressBar /></BrowserStrip>
    <Shell>
      <LeftTools />
      <Gutter />
      <Center>
        <TopTools />
        <PricePane />
        <StudyPane />
        <TimeScale />
        <RangeBar />
      </Center>
      <Gutter />
      <WidgetRail />
    </Shell>
    <StyleDialog />
  </Page>
);

export default App;
